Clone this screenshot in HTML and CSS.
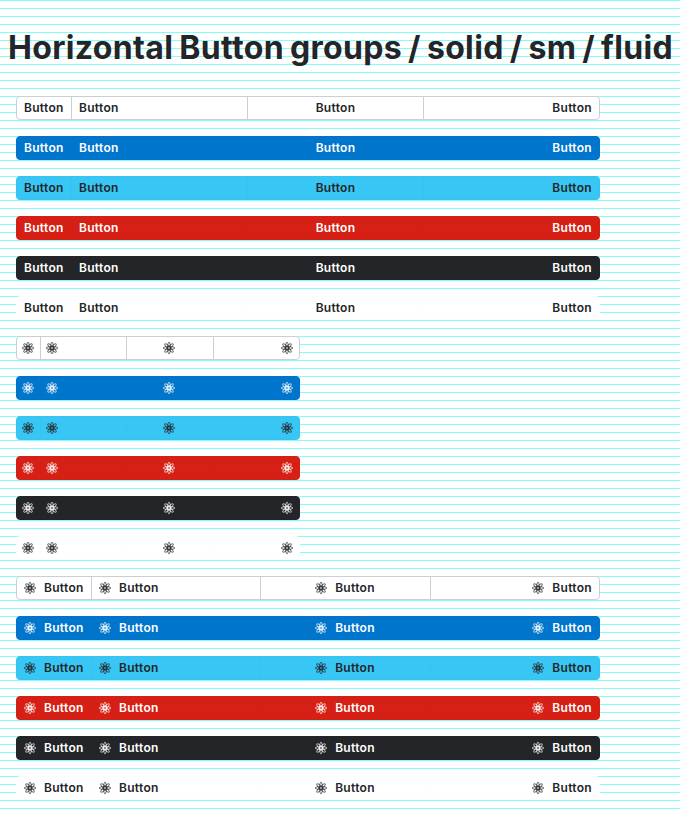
FILE: index.html
```
<!DOCTYPE html>
<html lang="en">
<head>
<meta charset="utf-8">
<title>Button groups</title>
<link rel="stylesheet" href="styles.css">
</head>
<body>
<svg class="defs" aria-hidden="true">
  <symbol id="atom" viewBox="0 0 24 24">
    <g fill="none" stroke="currentColor" stroke-width="1.4">
      <ellipse cx="12" cy="12" rx="11.7" ry="3"/>
      <ellipse cx="12" cy="12" rx="11.7" ry="3" transform="rotate(45 12 12)"/>
      <ellipse cx="12" cy="12" rx="11.7" ry="3" transform="rotate(90 12 12)"/>
      <ellipse cx="12" cy="12" rx="11.7" ry="3" transform="rotate(135 12 12)"/>
    </g>
    <circle cx="12" cy="12" r="1.6" fill="currentColor"/>
  </symbol>
</svg>
<h1>Horizontal Button groups / solid / sm / fluid</h1>
<main id="groups"></main>
<script src="groups.js"></script>
</body>
</html>
```
FILE: styles.css
```
* { box-sizing: border-box; }
html { background: #fff; }
body {
  margin: 0;
  min-height: 816px;
  font-family: Inter, sans-serif;
  color: #232528;
  background: repeating-linear-gradient(to bottom, #80ffff 0, #80ffff 1px, #fff 1px, #fff 8px);
}
.defs { position: absolute; width: 0; height: 0; }
h1 {
  margin: 0;
  padding: 24px 8px 0;
  height: 96px;
  font-size: 32px;
  line-height: 48px;
  font-weight: 700;
  letter-spacing: 0.34px;
  word-spacing: -1.9px;
  white-space: nowrap;
}
main { display: flex; flex-direction: column; gap: 16px; padding: 0 16px; }
.group { display: flex; width: 584px; height: 24px; }
.group.icon { width: 284px; }
.btn {
  display: flex;
  flex: 1 1 0;
  align-items: center;
  gap: 8px;
  margin: 0 0 0 -1px;
  padding: 0 7px;
  border: 1px solid var(--line);
  background: var(--fill);
  color: var(--ink);
  font: 600 12px/22px Inter, sans-serif;
  letter-spacing: 0.3px;
}
.btn:first-child { flex: none; width: 56px; margin-left: 0; border-radius: 4px 0 0 4px; }
.btn:last-child { justify-content: flex-end; border-radius: 0 4px 4px 0; }
.btn:nth-child(3) { justify-content: center; }
.icon .btn { padding: 0 6px 0 5px; }
.icon .btn:first-child { width: 25px; }
.both .btn:first-child { width: 76px; }
.both .btn:nth-child(3) { padding-right: 8px; }
.btn svg { flex: none; width: 12px; height: 12px; overflow: visible; }
.default { --fill: #fff; --line: #cbced4; --ink: #232528; }
.primary { --fill: #0075cc; --line: #0073c9; --ink: #fff; }
.info { --fill: #38c6f4; --line: #36c3f1; --ink: #232528; }
.danger { --fill: #d72015; --line: #d41f15; --ink: #fff; }
.dark { --fill: #232528; --line: #222427; --ink: #fff; }
.plain { --fill: #fff; --line: #fdfdfd; --ink: #232528; }
```
FILE: groups.js
```
const icon = '<svg><use href="#atom"/></svg>';
const label = '<span>Button</span>';
const contents = { text: label, icon: icon, both: icon + label };
const tones = ['default', 'primary', 'info', 'danger', 'dark', 'plain'];
document.getElementById('groups').innerHTML = Object.keys(contents).map(kind =>
  tones.map(tone =>
    `<div class="group ${kind} ${tone}">` +
    `<button class="btn" aria-label="Button">${contents[kind]}</button>`.repeat(4) +
    '</div>').join('')).join('');
```
